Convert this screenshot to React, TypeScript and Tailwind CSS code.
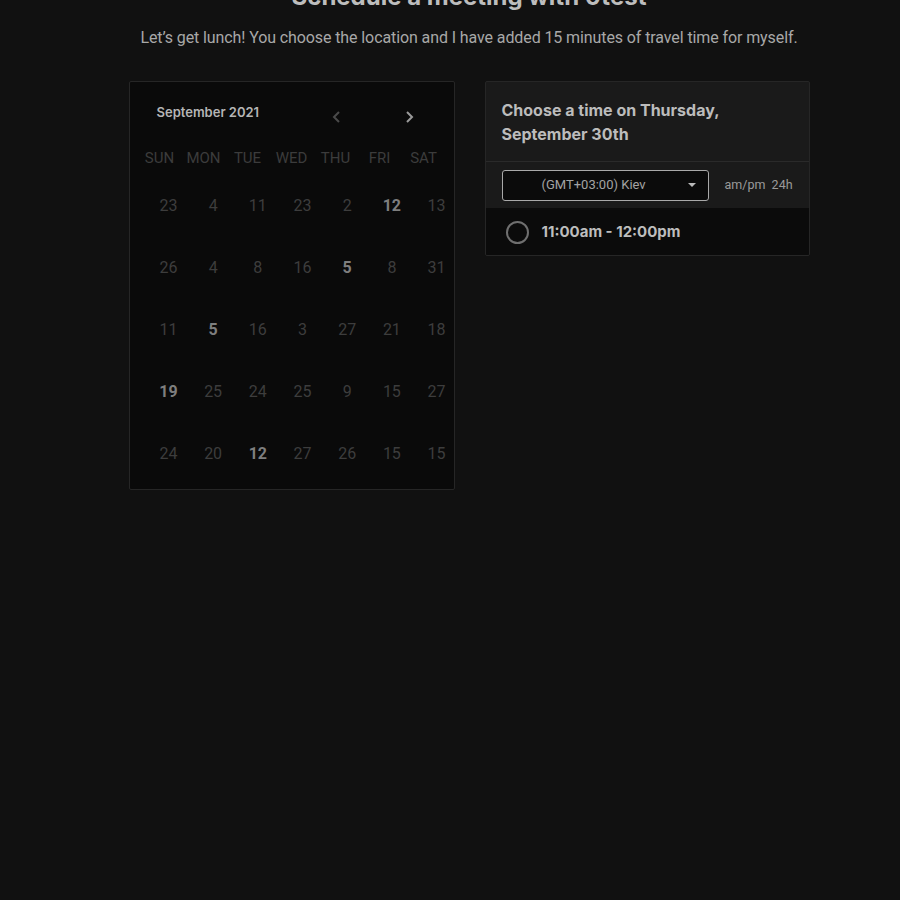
import React from 'react';

const rows: [number, boolean][][] = [
  [[23, false], [4, false], [11, false], [23, false], [2, false], [12, true], [13, false]],
  [[26, false], [4, false], [8, false], [16, false], [5, true], [8, false], [31, false]],
  [[11, false], [5, true], [16, false], [3, false], [27, false], [21, false], [18, false]],
  [[19, true], [25, false], [24, false], [25, false], [9, false], [15, false], [27, false]],
  [[24, false], [20, false], [12, true], [27, false], [26, false], [15, false], [15, false]],
];

const weekdays = ['SUN', 'MON', 'TUE', 'WED', 'THU', 'FRI', 'SAT'];

export default function App() {
  return (
    <div className="min-h-screen bg-[#111111] overflow-hidden pl-[38px]" style={{ fontFamily: 'Roboto, sans-serif' }}>
      <div className="flex flex-col items-center">
        <h1 className="mt-[-19px] text-[24px] leading-[32px] font-bold text-[#bdbdbd] font-['Inter',sans-serif]">
          Schedule a meeting with 0test
        </h1>
        <p className="mt-[14px] text-[16px] leading-[22px] tracking-[-0.1px] text-[#a8a8a8]">
          Let’s get lunch! You choose the location and I have added 15 minutes of travel time for myself.
        </p>
      </div>

      <div className="mt-[32px] flex justify-center gap-[30px]">
        {/* Calendar */}
        <div className="w-[326px] h-[409px] border border-[#262626] rounded-[2px] bg-[#0a0a0a]">
          <div className="flex items-center h-[64px] pl-[27px] font-['Inter',sans-serif]">
            <span className="text-[13px] font-semibold text-[#b5b5b5] w-[170px] mt-[-2px]">September 2021</span>
            <svg width="12" height="14" viewBox="0 0 12 14" className="ml-[4px] mt-[6px]">
              <path d="M8 2 L3 7 L8 12" fill="none" stroke="#4a4a4a" strokeWidth="2" />
            </svg>
            <svg width="12" height="14" viewBox="0 0 12 14" className="ml-[60px] mt-[6px]">
              <path d="M4 2 L9 7 L4 12" fill="none" stroke="#9a9a9a" strokeWidth="2" />
            </svg>
          </div>
          <div className="flex pl-[8px] mt-[1px]">
            {weekdays.map(d => (
              <div key={d} className="w-[44px] text-center text-[15px] text-[#3c3c3c]">{d}</div>
            ))}
          </div>
          <div className="mt-[5px] pl-[16.6px]">
            {rows.map((r, i) => (
              <div key={i} className="flex h-[62px] items-center">
                {r.map(([n, bold], j) => (
                  <div
                    key={j}
                    className={
                      'w-[44.7px] shrink-0 text-center text-[16px] ' +
                      (bold ? 'font-bold text-[#7e7e7e]' : 'text-[#3d3d3d]')
                    }
                  >
                    {n}
                  </div>
                ))}
              </div>
            ))}
          </div>
        </div>

        {/* Time picker */}
        <div className="w-[325px] h-[175px] border border-[#262626] rounded-[2px] bg-[#1a1a1a] overflow-hidden font-['Inter',sans-serif]">
          <div className="h-[80px] px-[16px] pt-[16px] border-b border-[#2a2a2a]">
            <div className="text-[16px] leading-[24px] font-bold text-[#bcbcbc]">
              Choose a time on Thursday,<br />September 30th
            </div>
          </div>
          <div className="h-[46px] flex items-center pl-[16px]">
            <div className="w-[207px] h-[31px] border border-[#a9a9a9] rounded-[3px] bg-[#0b0b0b] flex items-center pl-[39px] pr-[12px]">
              <span className="text-[13px] text-[#a3a3a3] flex-1" style={{ fontFamily: 'Roboto, sans-serif' }}>(GMT+03:00) Kiev</span>
              <svg width="8" height="5" viewBox="0 0 8 5"><path d="M0 0 L8 0 L4 4 Z" fill="#bbbbbb" /></svg>
            </div>
            <span className="ml-[16px] text-[12.5px] text-[#9a9a9a] whitespace-pre" style={{ fontFamily: 'Roboto, sans-serif' }}>am/pm  24h</span>
          </div>
          <div className="h-[49px] bg-[#0b0b0b] flex items-center pl-[20px]">
            <div className="w-[23px] h-[23px] rounded-full border-2 border-[#6f6f6f]" />
            <span className="ml-[13px] text-[15px] font-bold text-[#bdbdbd]">11:00am - 12:00pm</span>
          </div>
        </div>
      </div>
    </div>
  );
}
